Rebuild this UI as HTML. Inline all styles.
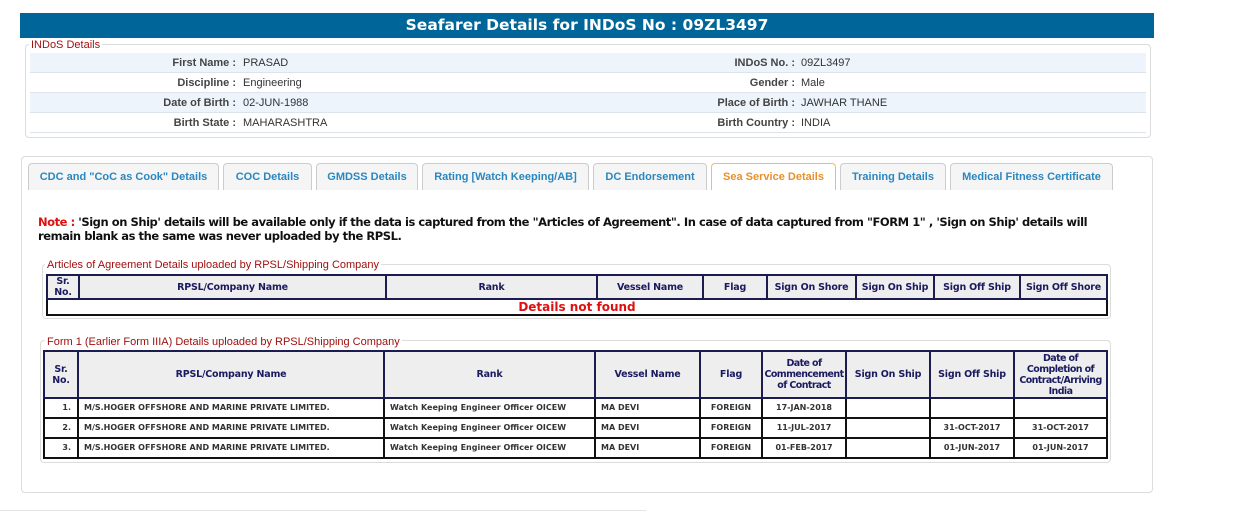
<!DOCTYPE html>
<html><head><meta charset="utf-8"><style>
body{margin:0;width:1239px;height:514px;background:#fff;position:relative;overflow:hidden;font-family:"Liberation Sans",Arial,sans-serif}
.a{position:absolute}
.hdr{left:20px;top:13px;width:1134px;height:25px;background:#006699;color:#fff;font:bold 15.5px "DejaVu Sans",Verdana,sans-serif;text-align:center;line-height:25px}
.fs{border:1px solid #dcdcdc;border-radius:4px}
.leg{background:#fff;color:#a01010;font-size:11px;padding:0 2px;line-height:12px}
.row{left:30px;width:1116px;height:19px;font-size:11px;color:#333;line-height:20px;border-bottom:1px solid #dde3ea}
.row.s{background:#eef4fb}
.lb{position:absolute;text-align:right;font-weight:bold;color:#444}
.vl{position:absolute}
.tab{top:163px;height:27px;border:1px solid #ccc;border-bottom:none;border-radius:4px 4px 0 0;background:#f5f5f5;color:#2a87c0;font-size:11px;font-weight:bold;text-align:center;line-height:27px;box-sizing:border-box}
.tab.on{background:#fff;border-color:#f0c060;color:#e8902a}
.note{left:38px;top:215px;width:1070px;font:bold 11.5px "DejaVu Sans",Verdana,sans-serif;color:#111;line-height:14px;letter-spacing:-0.45px}
table{position:absolute;border-collapse:collapse;font:bold 9px "DejaVu Sans",Verdana,sans-serif;table-layout:fixed}
th{background:#eeeeee;color:#1a1a60;border:2px solid #1c1c50;font-size:9.5px;padding:0;text-align:center;line-height:11px;letter-spacing:-0.2px}
td{border:2px solid #111;padding:0 0 0 5px;color:#333;font-size:8px;height:18px;line-height:18px;white-space:nowrap;overflow:hidden}
td.c{text-align:center;padding:0}
td.r{text-align:right;padding:0 6px 0 0}
</style></head><body>
<div class="a hdr">Seafarer Details for INDoS No : 09ZL3497</div>
<div class="a fs" style="left:25px;top:44px;width:1124px;height:92px"></div>
<div class="a leg" style="left:29px;top:39px">INDoS Details</div>
<div class="a row s" style="top:53px"><span class="lb" style="right:910px">First Name :</span><span class="vl" style="left:213px">PRASAD</span><span class="lb" style="right:351px">INDoS No. :</span><span class="vl" style="left:771px">09ZL3497</span></div>
<div class="a row" style="top:73px"><span class="lb" style="right:910px">Discipline :</span><span class="vl" style="left:213px">Engineering</span><span class="lb" style="right:351px">Gender :</span><span class="vl" style="left:771px">Male</span></div>
<div class="a row s" style="top:93px"><span class="lb" style="right:910px">Date of Birth :</span><span class="vl" style="left:213px">02-JUN-1988</span><span class="lb" style="right:351px">Place of Birth :</span><span class="vl" style="left:771px">JAWHAR THANE</span></div>
<div class="a row" style="top:113px"><span class="lb" style="right:910px">Birth State :</span><span class="vl" style="left:213px">MAHARASHTRA</span><span class="lb" style="right:351px">Birth Country :</span><span class="vl" style="left:771px">INDIA</span></div>

<div class="a fs" style="left:21px;top:156px;width:1130px;height:335px"></div>
<div class="a tab" style="left:28px;width:191px">CDC and "CoC as Cook" Details</div>
<div class="a tab" style="left:223px;width:89px">COC Details</div>
<div class="a tab" style="left:316px;width:102px">GMDSS Details</div>
<div class="a tab" style="left:422px;width:167px">Rating [Watch Keeping/AB]</div>
<div class="a tab" style="left:593px;width:114px">DC Endorsement</div>
<div class="a tab on" style="left:711px;width:125px">Sea Service Details</div>
<div class="a tab" style="left:840px;width:106px">Training Details</div>
<div class="a tab" style="left:950px;width:163px">Medical Fitness Certificate</div>

<div class="a note"><span style="color:#e01010">Note :</span> 'Sign on Ship' details will be available only if the data is captured from the "Articles of Agreement". In case of data captured from "FORM 1" , 'Sign on Ship' details will remain blank as the same was never uploaded by the RPSL.</div>

<div class="a fs" style="left:42px;top:264px;width:1067px;height:53px"></div>
<div class="a leg" style="left:45px;top:259px">Articles of Agreement Details uploaded by RPSL/Shipping Company</div>
<table style="left:46px;top:274px;width:1060px">
<colgroup><col style="width:32px"><col style="width:307px"><col style="width:211px"><col style="width:106px"><col style="width:64px"><col style="width:89px"><col style="width:78px"><col style="width:86px"><col style="width:87px"></colgroup>
<tr style="height:24px"><th>Sr.<br>No.</th><th>RPSL/Company Name</th><th>Rank</th><th>Vessel Name</th><th>Flag</th><th>Sign On Shore</th><th>Sign On Ship</th><th>Sign Off Ship</th><th>Sign Off Shore</th></tr>
<tr><td colspan="9" class="c" style="color:#e01010;font-size:12px;height:14px;line-height:14px">Details not found</td></tr>
</table>

<div class="a fs" style="left:40px;top:340px;width:1069px;height:121px"></div>
<div class="a leg" style="left:45px;top:336px">Form 1 (Earlier Form IIIA) Details uploaded by RPSL/Shipping Company</div>
<table style="left:43px;top:350px;width:1063px">
<colgroup><col style="width:34px"><col style="width:306px"><col style="width:211px"><col style="width:105px"><col style="width:62px"><col style="width:84px"><col style="width:84px"><col style="width:84px"><col style="width:93px"></colgroup>
<tr style="height:47px"><th>Sr.<br>No.</th><th>RPSL/Company Name</th><th>Rank</th><th>Vessel Name</th><th>Flag</th><th style="letter-spacing:-0.6px">Date of Commencement of Contract</th><th>Sign On Ship</th><th>Sign Off Ship</th><th style="letter-spacing:-0.6px">Date of Completion of Contract/Arriving India</th></tr>
<tr><td class="r">1.</td><td>M/S.HOGER OFFSHORE AND MARINE PRIVATE LIMITED.</td><td>Watch Keeping Engineer Officer OICEW</td><td>MA DEVI</td><td class="c">FOREIGN</td><td class="c">17-JAN-2018</td><td></td><td></td><td></td></tr>
<tr><td class="r">2.</td><td>M/S.HOGER OFFSHORE AND MARINE PRIVATE LIMITED.</td><td>Watch Keeping Engineer Officer OICEW</td><td>MA DEVI</td><td class="c">FOREIGN</td><td class="c">11-JUL-2017</td><td></td><td class="c">31-OCT-2017</td><td class="c">31-OCT-2017</td></tr>
<tr><td class="r">3.</td><td>M/S.HOGER OFFSHORE AND MARINE PRIVATE LIMITED.</td><td>Watch Keeping Engineer Officer OICEW</td><td>MA DEVI</td><td class="c">FOREIGN</td><td class="c">01-FEB-2017</td><td></td><td class="c">01-JUN-2017</td><td class="c">01-JUN-2017</td></tr>
</table>
<div class="a" style="left:0;top:510px;width:646px;height:1px;background:#e4e4e4"></div>
</body></html>
